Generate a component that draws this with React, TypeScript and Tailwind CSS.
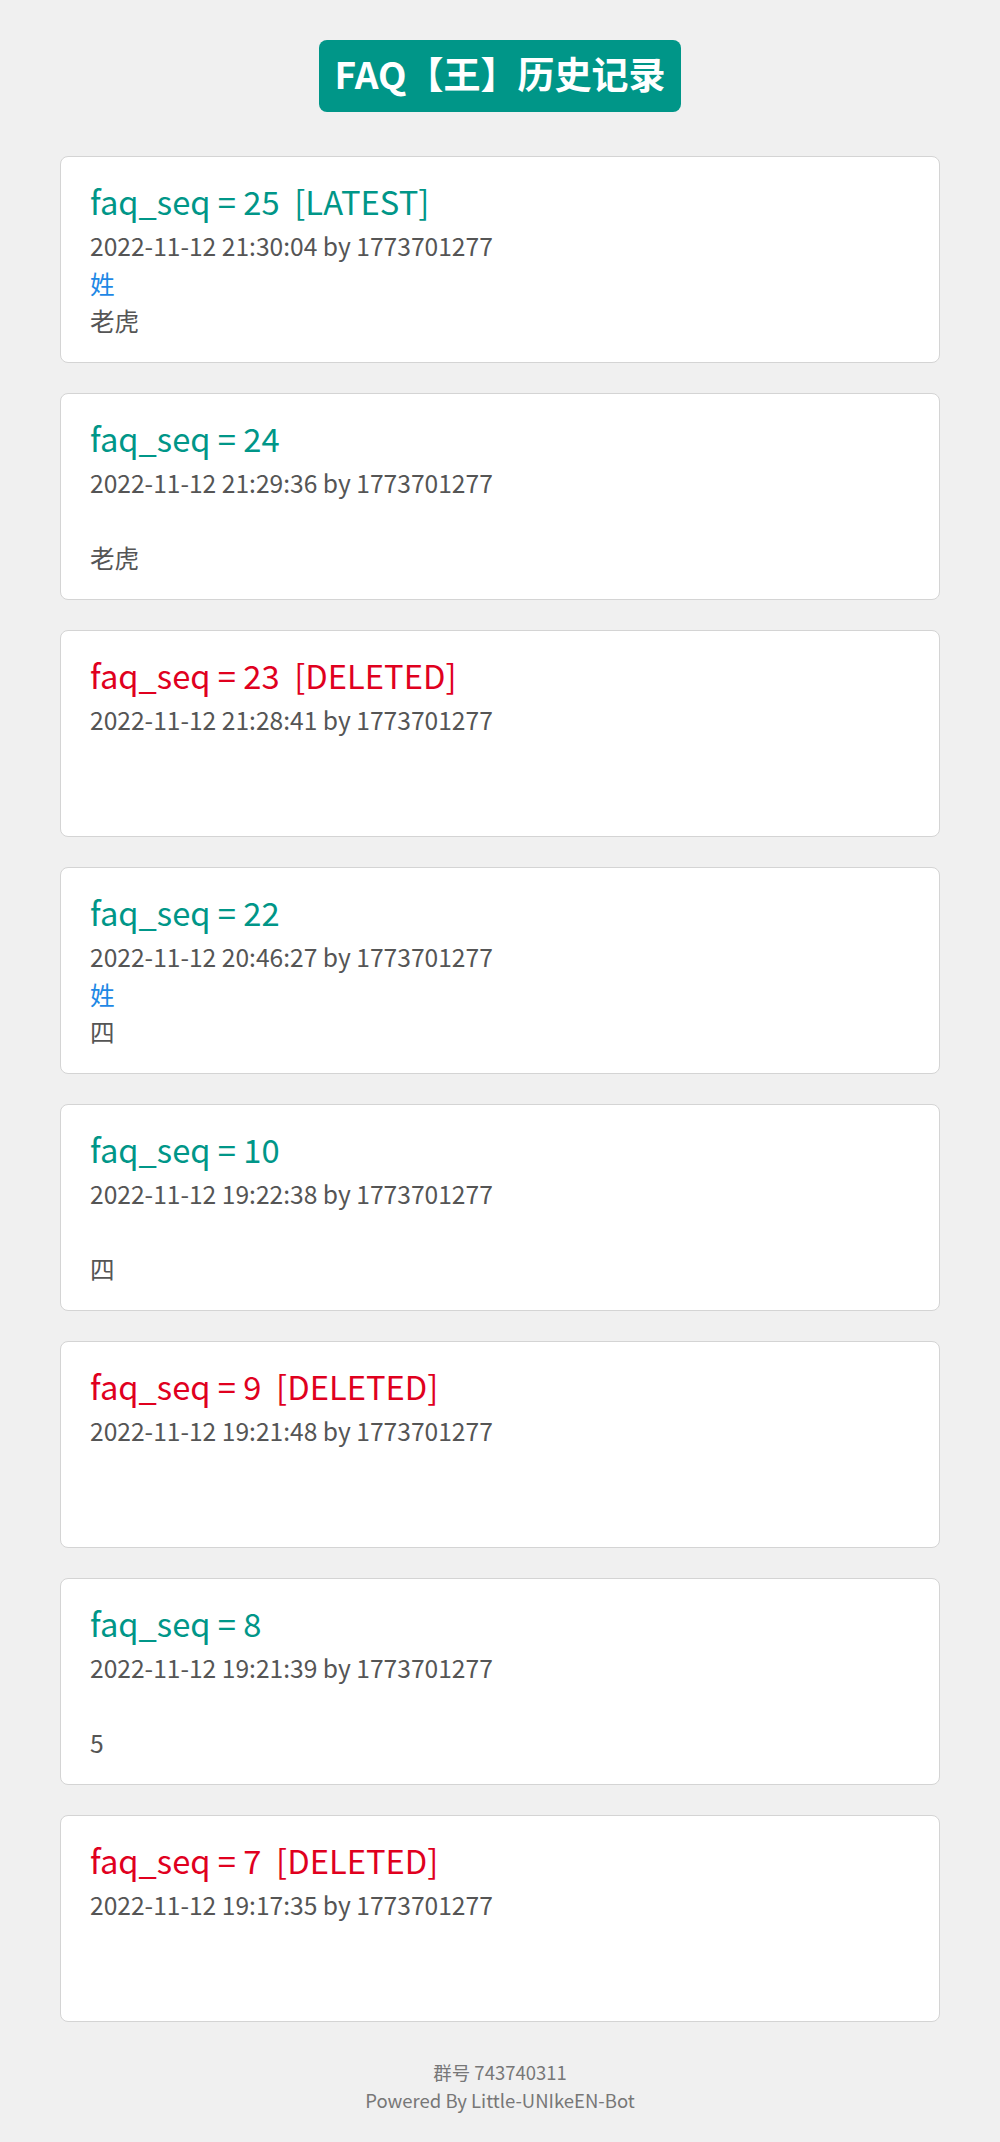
import * as React from "react";

type FaqRecord = {
  seq: number;
  time: string;
  user: string;
  question?: string;
  answer?: string;
  tag?: "LATEST" | "DELETED";
};

const records: FaqRecord[] = [
  { seq: 25, time: "2022-11-12 21:30:04", user: "1773701277", question: "姓", answer: "老虎", tag: "LATEST" },
  { seq: 24, time: "2022-11-12 21:29:36", user: "1773701277", answer: "老虎" },
  { seq: 23, time: "2022-11-12 21:28:41", user: "1773701277", tag: "DELETED" },
  { seq: 22, time: "2022-11-12 20:46:27", user: "1773701277", question: "姓", answer: "四" },
  { seq: 10, time: "2022-11-12 19:22:38", user: "1773701277", answer: "四" },
  { seq: 9, time: "2022-11-12 19:21:48", user: "1773701277", tag: "DELETED" },
  { seq: 8, time: "2022-11-12 19:21:39", user: "1773701277", answer: "5" },
  { seq: 7, time: "2022-11-12 19:17:35", user: "1773701277", tag: "DELETED" },
];

const font = { fontFamily: '"Noto Sans CJK SC", "Noto Sans", sans-serif' };

function RecordCard({ rec }: { rec: FaqRecord }) {
  const deleted = rec.tag === "DELETED";
  return (
    <div className="bg-white border border-[#d4d4d4] rounded-lg pl-[29px] pr-6 pt-[21px] pb-[24px]">
      <div className={`text-[32.7px] leading-[45px] h-[49px] ${deleted ? "text-[#e0001e]" : "text-[#009688]"}`}>
        faq_seq = {rec.seq}
        {rec.tag && <span>&nbsp;&nbsp;[{rec.tag}]</span>}
      </div>
      <div className="text-[24.6px] leading-[37px] h-[37px] text-[#555555]">
        {rec.time} by {rec.user}
      </div>
      <div className="text-[24.6px] leading-[39px] h-[37px] text-[#1e88e5]">{rec.question}</div>
      <div className="text-[24.6px] leading-[38px] h-[37px] text-[#555555]">{rec.answer}</div>
    </div>
  );
}

export default function App() {
  return (
    <div className="min-h-[2142px] bg-[#f0f0f0] pt-[40px]" style={font}>
      <div className="flex justify-center">
        <div className="bg-[#009688] text-white font-bold text-[37px] leading-[67px] h-[72px] px-4 rounded-lg">
          FAQ【王】历史记录
        </div>
      </div>
      <div className="mx-[60px] mt-[44px] flex flex-col gap-[30px]">
        {records.map((r) => (
          <RecordCard key={r.seq} rec={r} />
        ))}
      </div>
      <div className="mt-[36px] text-center text-[18.5px] leading-[28px] text-[#777777]">
        <div>群号 743740311</div>
        <div>Powered By Little-UNIkeEN-Bot</div>
      </div>
    </div>
  );
}
